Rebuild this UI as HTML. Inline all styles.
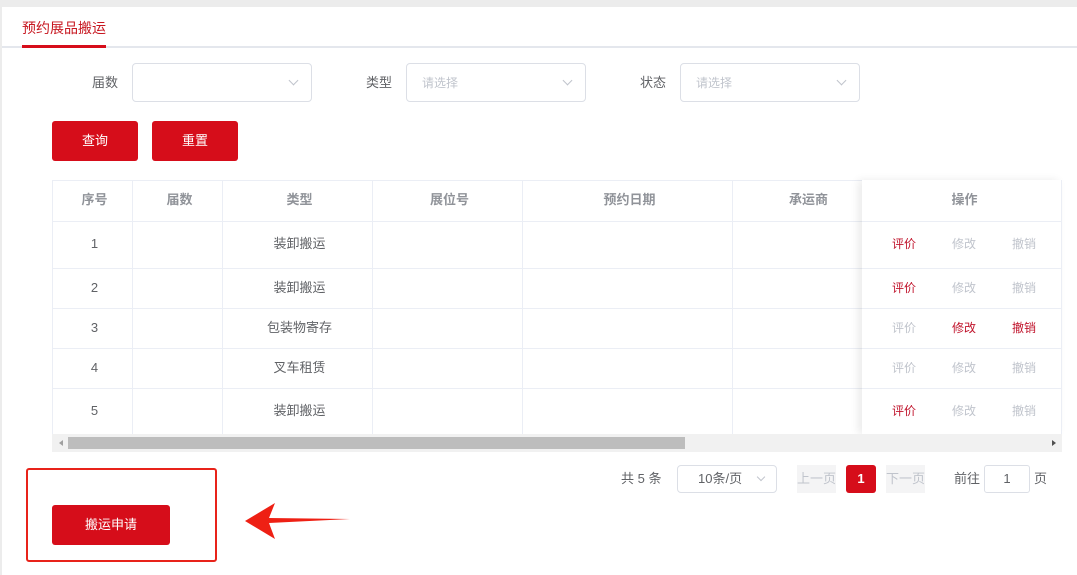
<!DOCTYPE html>
<html><head><meta charset="utf-8"><style>
*{margin:0;padding:0;box-sizing:border-box}
body{width:1077px;height:575px;background:#fff;font-family:"Liberation Sans","Noto Sans CJK SC",sans-serif;font-size:13px;color:#606266;position:relative;overflow:hidden}
.a{position:absolute;line-height:20px;height:20px}
.b{position:absolute}
.sel{position:absolute;height:39px;border:1px solid #dcdfe6;border-radius:4px;background:#fff}
.sel span{position:absolute;left:15px;top:9px;line-height:20px;color:#c0c4cc;font-size:12px}
.sel i{position:absolute;right:14px;top:13px;width:7px;height:7px;border-right:1px solid #c0c4cc;border-bottom:1px solid #c0c4cc;transform:rotate(45deg)}
.btn{position:absolute;background:#d60d1a;color:#fff;border-radius:3px;text-align:center;font-size:13px}
.c{position:absolute;text-align:center;font-size:13px;height:20px;line-height:20px}
.h{font-weight:bold;color:#909399}
.vl{position:absolute;width:1px;background:#ebeef5;top:180px;height:254px}
.hl{position:absolute;height:1px;background:#ebeef5;left:52px;width:1010px}
.op{position:absolute;font-size:12px;height:20px;line-height:20px}
.r{color:#c0142c}.g{color:#c0c4cc}
</style></head><body>
<div class="b" style="left:0;top:0;width:1077px;height:7px;background:#ececec"></div>
<div class="b" style="left:0;top:0;width:2px;height:575px;background:#ececec"></div>
<div class="a" style="left:22px;top:18px;color:#c7161f;font-size:14px">预约展品搬运</div>
<div class="b" style="left:2px;top:46px;width:1075px;height:2px;background:#e4e7ed"></div>
<div class="b" style="left:22px;top:45px;width:84px;height:3px;background:#d60d1a"></div>

<div class="a" style="left:92px;top:73px">届数</div>
<div class="sel" style="left:132px;top:63px;width:180px"><i></i></div>
<div class="a" style="left:366px;top:73px">类型</div>
<div class="sel" style="left:406px;top:63px;width:180px"><span>请选择</span><i></i></div>
<div class="a" style="left:640px;top:73px">状态</div>
<div class="sel" style="left:680px;top:63px;width:180px"><span>请选择</span><i></i></div>

<div class="btn" style="left:52px;top:121px;width:86px;height:40px;line-height:40px">查询</div>
<div class="btn" style="left:152px;top:121px;width:86px;height:40px;line-height:40px">重置</div>

<div class="b" style="left:52px;top:180px;width:1010px;height:272px;border:1px solid #ebeef5;border-bottom:none"></div>
<div class="hl" style="top:180px"></div>
<div class="hl" style="top:221px"></div>
<div class="hl" style="top:268px"></div>
<div class="hl" style="top:308px"></div>
<div class="hl" style="top:348px"></div>
<div class="hl" style="top:388px"></div>
<div class="vl" style="left:132px"></div>
<div class="vl" style="left:222px"></div>
<div class="vl" style="left:372px"></div>
<div class="vl" style="left:522px"></div>
<div class="vl" style="left:732px"></div>
<div class="b" style="left:862px;top:180px;width:200px;height:254px;background:#fff;box-shadow:-4px 0 8px rgba(0,0,0,.08);border-right:1px solid #ebeef5"></div>
<div class="hl" style="top:221px;left:862px;width:200px"></div>
<div class="hl" style="top:268px;left:862px;width:200px"></div>
<div class="hl" style="top:308px;left:862px;width:200px"></div>
<div class="hl" style="top:348px;left:862px;width:200px"></div>
<div class="hl" style="top:388px;left:862px;width:200px"></div>

<div class="c h" style="left:52px;width:85px;top:190px">序号</div>
<div class="c h" style="left:132px;width:95px;top:190px">届数</div>
<div class="c h" style="left:222px;width:155px;top:190px">类型</div>
<div class="c h" style="left:372px;width:155px;top:190px">展位号</div>
<div class="c h" style="left:522px;width:215px;top:190px">预约日期</div>
<div class="c h" style="left:732px;width:200px;top:190px;text-align:left;padding-left:57px">承运商</div>
<div class="c h" style="left:862px;width:205px;top:190px">操作</div>

<div class="c" style="left:52px;width:85px;top:234px">1</div>
<div class="c" style="left:222px;width:155px;top:234px">装卸搬运</div>
<div class="c" style="left:52px;width:85px;top:278px">2</div>
<div class="c" style="left:222px;width:155px;top:278px">装卸搬运</div>
<div class="c" style="left:52px;width:85px;top:318px">3</div>
<div class="c" style="left:222px;width:155px;top:318px">包装物寄存</div>
<div class="c" style="left:52px;width:85px;top:358px">4</div>
<div class="c" style="left:222px;width:155px;top:358px">叉车租赁</div>
<div class="c" style="left:52px;width:85px;top:401px">5</div>
<div class="c" style="left:222px;width:155px;top:401px">装卸搬运</div>

<div class="op r" style="left:892px;top:234px">评价</div><div class="op g" style="left:952px;top:234px">修改</div><div class="op g" style="left:1012px;top:234px">撤销</div>
<div class="op r" style="left:892px;top:278px">评价</div><div class="op g" style="left:952px;top:278px">修改</div><div class="op g" style="left:1012px;top:278px">撤销</div>
<div class="op g" style="left:892px;top:318px">评价</div><div class="op r" style="left:952px;top:318px">修改</div><div class="op r" style="left:1012px;top:318px">撤销</div>
<div class="op g" style="left:892px;top:358px">评价</div><div class="op g" style="left:952px;top:358px">修改</div><div class="op g" style="left:1012px;top:358px">撤销</div>
<div class="op r" style="left:892px;top:401px">评价</div><div class="op g" style="left:952px;top:401px">修改</div><div class="op g" style="left:1012px;top:401px">撤销</div>

<div class="b" style="left:52px;top:434px;width:1010px;height:18px;background:#f1f1f1"></div>
<div class="b" style="left:68px;top:437px;width:617px;height:12px;background:#bdbdbd"></div>
<div class="b" style="left:59px;top:440px;width:0;height:0;border-top:3px solid transparent;border-bottom:3px solid transparent;border-right:4px solid #a0a0a0"></div>
<div class="b" style="left:1052px;top:440px;width:0;height:0;border-top:3px solid transparent;border-bottom:3px solid transparent;border-left:4px solid #505050"></div>

<div class="a" style="left:621px;top:469px">共 5 条</div>
<div class="sel" style="left:677px;top:465px;width:100px;height:28px"><span style="left:20px;top:3px;color:#606266;font-size:13px">10条/页</span><i style="top:8px;right:12px;width:6px;height:6px"></i></div>
<div class="b" style="left:797px;top:465px;width:39px;height:28px;background:#f4f4f5;color:#c0c4cc;line-height:28px;text-align:center;font-size:13px">上一页</div>
<div class="btn" style="left:846px;top:465px;width:30px;height:28px;line-height:28px;font-weight:bold">1</div>
<div class="b" style="left:886px;top:465px;width:39px;height:28px;background:#f4f4f5;color:#c0c4cc;line-height:28px;text-align:center;font-size:13px">下一页</div>
<div class="a" style="left:954px;top:469px">前往</div>
<div class="b" style="left:984px;top:465px;width:46px;height:28px;border:1px solid #dcdfe6;border-radius:3px;text-align:center;line-height:26px">1</div>
<div class="a" style="left:1034px;top:469px">页</div>

<div class="b" style="left:26px;top:468px;width:191px;height:94px;border:2px solid #e8231a;border-radius:3px"></div>
<div class="btn" style="left:52px;top:505px;width:118px;height:40px;line-height:40px">搬运申请</div>
<svg class="b" style="left:240px;top:500px" width="115" height="42"><polygon points="5,21 35,3 29,18 110,19 29,23 35,39" fill="#ee2014"/></svg>
</body></html>
